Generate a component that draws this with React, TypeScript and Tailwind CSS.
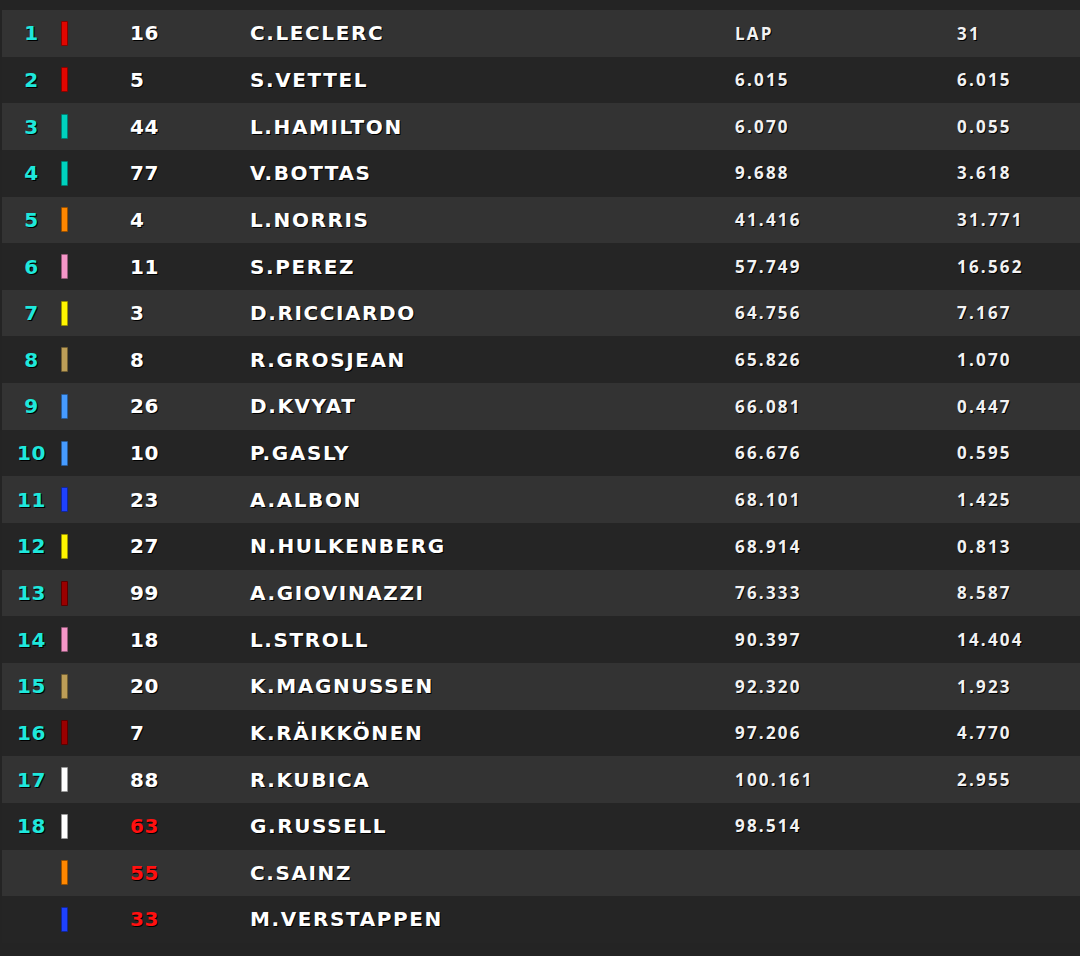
import React from "react";

type Row = {
  pos: string;
  color: string;
  num: string;
  name: string;
  time: string;
  gap: string;
  out?: boolean;
};

const rows: Row[] = [
  { pos: "1", color: "bg-[#e10600]", num: "16", name: "C.LECLERC", time: "LAP", gap: "31" },
  { pos: "2", color: "bg-[#e10600]", num: "5", name: "S.VETTEL", time: "6.015", gap: "6.015" },
  { pos: "3", color: "bg-[#00d2be]", num: "44", name: "L.HAMILTON", time: "6.070", gap: "0.055" },
  { pos: "4", color: "bg-[#00d2be]", num: "77", name: "V.BOTTAS", time: "9.688", gap: "3.618" },
  { pos: "5", color: "bg-[#ff8700]", num: "4", name: "L.NORRIS", time: "41.416", gap: "31.771" },
  { pos: "6", color: "bg-[#f596c8]", num: "11", name: "S.PEREZ", time: "57.749", gap: "16.562" },
  { pos: "7", color: "bg-[#fff500]", num: "3", name: "D.RICCIARDO", time: "64.756", gap: "7.167" },
  { pos: "8", color: "bg-[#bd9e57]", num: "8", name: "R.GROSJEAN", time: "65.826", gap: "1.070" },
  { pos: "9", color: "bg-[#469bff]", num: "26", name: "D.KVYAT", time: "66.081", gap: "0.447" },
  { pos: "10", color: "bg-[#469bff]", num: "10", name: "P.GASLY", time: "66.676", gap: "0.595" },
  { pos: "11", color: "bg-[#1e41ff]", num: "23", name: "A.ALBON", time: "68.101", gap: "1.425" },
  { pos: "12", color: "bg-[#fff500]", num: "27", name: "N.HULKENBERG", time: "68.914", gap: "0.813" },
  { pos: "13", color: "bg-[#9b0000]", num: "99", name: "A.GIOVINAZZI", time: "76.333", gap: "8.587" },
  { pos: "14", color: "bg-[#f596c8]", num: "18", name: "L.STROLL", time: "90.397", gap: "14.404" },
  { pos: "15", color: "bg-[#bd9e57]", num: "20", name: "K.MAGNUSSEN", time: "92.320", gap: "1.923" },
  { pos: "16", color: "bg-[#9b0000]", num: "7", name: "K.RÄIKKÖNEN", time: "97.206", gap: "4.770" },
  { pos: "17", color: "bg-[#ffffff]", num: "88", name: "R.KUBICA", time: "100.161", gap: "2.955" },
  { pos: "18", color: "bg-[#ffffff]", num: "63", name: "G.RUSSELL", time: "98.514", gap: "", out: true },
  { pos: "", color: "bg-[#ff8700]", num: "55", name: "C.SAINZ", time: "", gap: "", out: true },
  { pos: "", color: "bg-[#1e41ff]", num: "33", name: "M.VERSTAPPEN", time: "", gap: "", out: true },
];

const wide = "font-['DejaVu_Sans',sans-serif] font-bold [text-shadow:1px_1px_0_#000]";
const small = "font-['Open_Sans',sans-serif] font-bold [text-shadow:1px_1px_0_#000]";

export default function App() {
  return (
    <div className="w-[1080px] h-[956px] bg-[#242424] pt-[10px] overflow-hidden">
      {rows.map((r, i) => (
        <div
          key={i}
          className={`flex items-center h-[46.65px] ml-[2px] ${i % 2 === 0 ? "bg-[#333333]" : "bg-[#252525]"}`}
        >
          <div className={`w-[59px] text-center text-[20px] tracking-[0.5px] text-[#1ee8dc] ${wide}`}>{r.pos}</div>
          <div className={`w-[7px] h-[25px] rounded-[1px] border border-black/40 ${r.color}`} />
          <div
            className={`ml-[62px] w-[120px] text-[20px] tracking-[0.5px] ${wide} ${r.out ? "text-[#ff1010]" : "text-white"}`}
          >
            {r.num}
          </div>
          <div className={`w-[485px] text-[20px] tracking-[1.6px] text-white ${wide}`}>{r.name}</div>
          <div className={`w-[222px] text-[17px] tracking-[2.2px] text-[#f2f2f2] ${small}`}>{r.time}</div>
          <div className={`text-[17px] tracking-[2.2px] text-[#f2f2f2] ${small}`}>{r.gap}</div>
        </div>
      ))}
    </div>
  );
}
